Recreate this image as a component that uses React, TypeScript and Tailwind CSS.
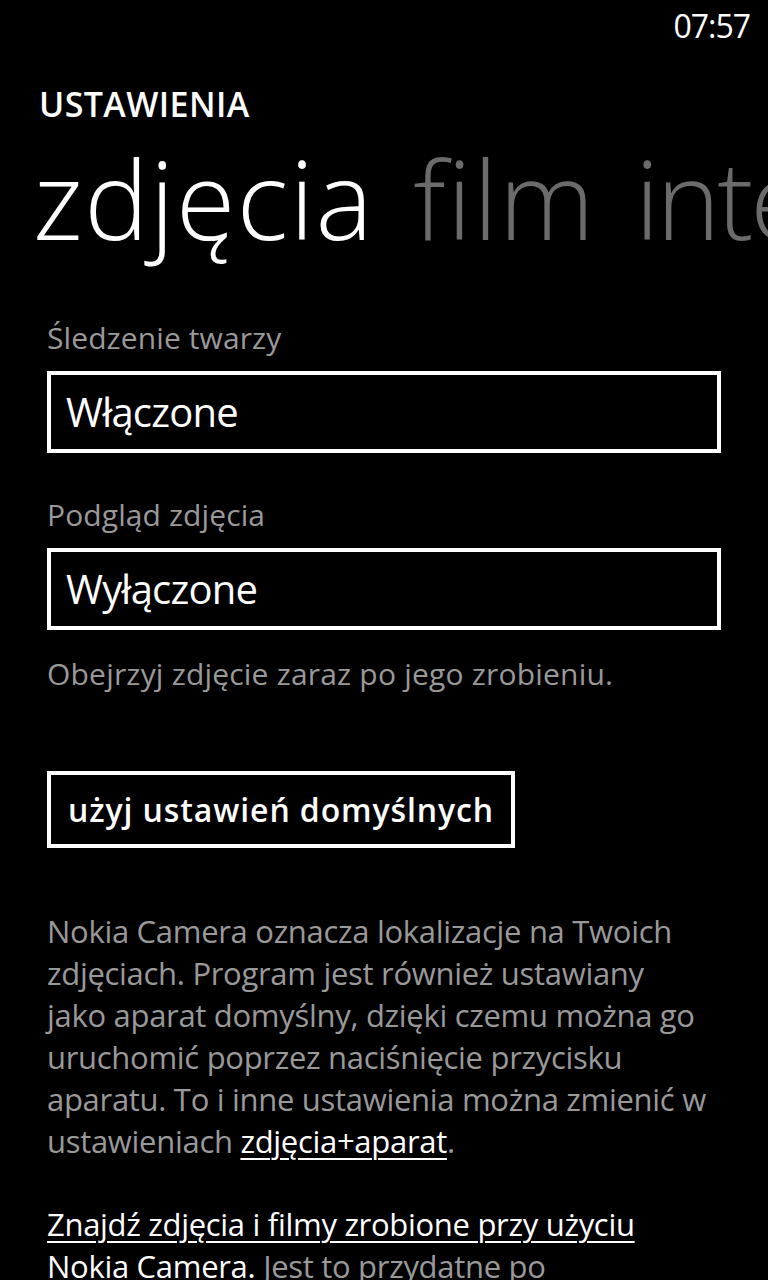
import React from "react";

export default function App() {
  return (
    <div className="w-[768px] h-[1280px] bg-black text-white overflow-hidden font-['Open_Sans','Noto_Sans',sans-serif]">
      <div className="flex justify-end pr-[18px] pt-[8px] text-[32px] leading-[36px] tracking-[-1px]">07:57</div>
      <div className="pl-[39px] mt-[40px] text-[34px] leading-[40px] font-semibold tracking-[0.4px]">USTAWIENIA</div>
      <div className="flex gap-[39px] whitespace-nowrap pl-[33px] mt-[10px] text-[108px] leading-[130px] font-light tracking-[1.5px]">
        <span>zdjęcia</span>
        <span className="text-[#6b6b6b]">film</span>
        <span className="text-[#6b6b6b] tracking-[-3px]">interfejs</span>
      </div>
      <div className="px-[47px] mt-[54px] flex flex-col">
        <div className="text-[30px] leading-[40px] text-[#999999] tracking-[0.1px]">Śledzenie twarzy</div>
        <div className="mt-[13px] h-[82px] border-[4px] border-white flex items-center pl-[15px] text-[40px] tracking-[-0.8px]">Włączone</div>
        <div className="mt-[42px] text-[30px] leading-[40px] text-[#999999] tracking-[0.1px]">Podgląd zdjęcia</div>
        <div className="mt-[13px] h-[82px] border-[4px] border-white flex items-center pl-[15px] text-[40px] tracking-[-0.8px]">Wyłączone</div>
        <div className="mt-[24px] text-[30px] leading-[40px] text-[#999999] tracking-[0.2px]">Obejrzyj zdjęcie zaraz po jego zrobieniu.</div>
        <div className="mt-[77px] self-start h-[77px] border-[4px] border-white flex items-center px-[17px] text-[32px] font-semibold tracking-[0.9px]">użyj ustawień domyślnych</div>
        <div className="mt-[62px] w-[660px] text-[31px] leading-[42px] text-[#999999] tracking-[-0.3px]">
          Nokia Camera oznacza lokalizacje na Twoich zdjęciach. Program jest również ustawiany jako aparat domyślny, dzięki czemu można go uruchomić poprzez naciśnięcie przycisku aparatu. To i inne ustawienia można zmienić w ustawieniach{" "}
          <span className="text-white underline underline-offset-[5px] decoration-[2px]">zdjęcia+aparat</span>.
        </div>
        <div className="mt-[41px] w-[600px] text-[31px] leading-[42px] text-[#999999] tracking-[-0.3px]">
          <span className="text-white underline underline-offset-[5px] decoration-[2px]">Znajdź zdjęcia i filmy zrobione przy użyciu Nokia Camera.</span>{" "}
          Jest to przydatne po zrobieniu wielu zdjęć.
        </div>
      </div>
    </div>
  );
}
